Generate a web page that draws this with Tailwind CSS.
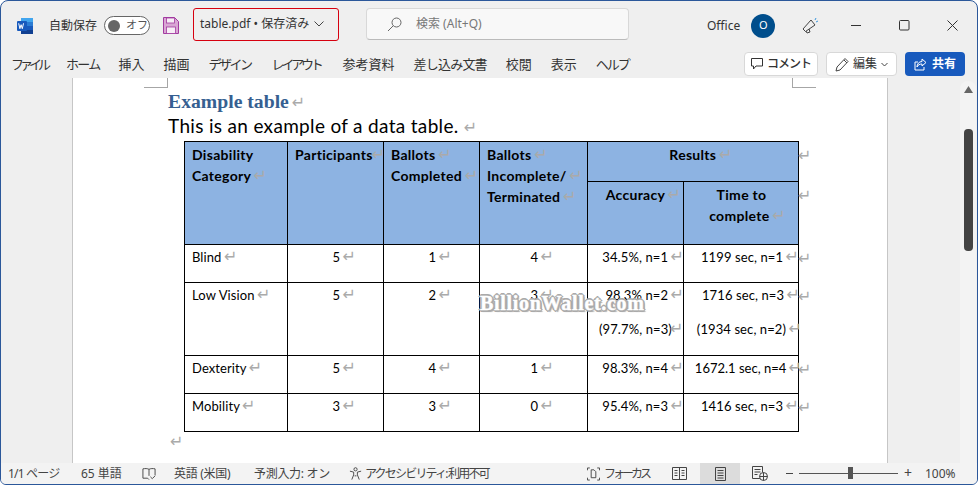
<!DOCTYPE html>
<html lang="ja">
<head>
<meta charset="UTF-8">
<title>table.pdf - Word</title>
<script src="https://cdn.jsdelivr.net/npm/@tailwindcss/browser@4"></script>
</head>
<body class="bg-white">
<div class="w-[978px] h-[485px] overflow-hidden flex flex-col bg-[#efefef] border border-[#2b579a] rounded-t-lg rounded-b-md font-['Noto_Sans','Noto_Sans_CJK_JP',sans-serif] text-[#333] relative">

  <!-- Title bar -->
  <div class="h-[49px] shrink-0 flex items-center text-[12px]">
    <svg class="ml-[15px] w-[18px] h-[18px]" viewBox="0 0 18 18">
      <rect x="5" y="1" width="12" height="4" fill="#41a5ee"/><rect x="5" y="5" width="12" height="4" fill="#2b7cd3"/><rect x="5" y="9" width="12" height="4" fill="#185abd"/><rect x="5" y="13" width="12" height="4" fill="#103f91"/>
      <rect x="1" y="4" width="10" height="10" rx="1" fill="#185abd"/>
      <path d="M2.700 6.300l1.200 5.400 1.200-4 1.200 4 1.200-5.400" fill="none" stroke="#fff" stroke-width="1"/>
    </svg>
    <span class="ml-[15px] w-[56px] whitespace-nowrap">自動保存</span>
    <div class="w-[46px] h-[19px] ml-[-1px] rounded-full border border-[#666] bg-white flex items-center pl-[3px]">
      <span class="w-[12px] h-[12px] rounded-full bg-[#666]"></span>
      <span class="ml-[6px] text-[11px] text-[#555] whitespace-nowrap">オフ</span>
    </div>
    <svg class="ml-[13px] w-[16px] h-[17px]" viewBox="0 0 16 17">
      <path d="M.5.5h11l4 4v12H.5z" fill="#d9a6d4" stroke="#a23aa0"/>
      <rect x="3.500" y="1" width="8" height="5" fill="#f7edf6" stroke="#a23aa0" stroke-width=".8"/>
      <rect x="3.500" y="10" width="9" height="6.500" fill="#f7edf6" stroke="#a23aa0" stroke-width=".8"/>
    </svg>
    <div class="ml-[14px] w-[146px] h-[33px] mb-[3px] border border-[#d6000f] rounded-[3px] flex items-center pl-[6px] whitespace-nowrap">
      table.pdf • 保存済み
      <svg class="ml-[5px] w-[10px] h-[6px]" viewBox="0 0 10 6"><path d="M.5.5L5 5 9.500.5" fill="none" stroke="#444"/></svg>
    </div>
    <div class="ml-[27px] w-[263px] h-[32px] mb-[3px] bg-[#f8f8f8] border border-[#d8d8d8] border-b-[#bbb] rounded-[4px] flex items-center pl-[20px] text-[#777] whitespace-nowrap">
      <svg class="w-[15px] h-[15px]" viewBox="0 0 15 15"><circle cx="9.500" cy="5.500" r="4.500" fill="none" stroke="#666"/><path d="M6.300 8.700L1 14" stroke="#666"/></svg>
      <span class="ml-[14px]">検索 (Alt+Q)</span>
    </div>
    <span class="ml-[78px] text-[#333]">Office</span>
    <span class="ml-[11px] w-[24px] h-[24px] rounded-full bg-[#004e8c] text-white text-[11px] flex items-center justify-center">O</span>
    <svg class="ml-[26px] w-[19px] h-[19px]" viewBox="0 0 19 19">
      <path d="M2 13l8-9 4 5-9.500 6.500zM5 15l1 2 3-1-1-3" fill="none" stroke="#444"/>
      <path d="M15 2l-1 2M17 5l-2 1" stroke="#3a96dd"/>
    </svg>
    <svg class="ml-[31px] w-[11px] h-[11px]" viewBox="0 0 11 11"><path d="M0 5.500h10" stroke="#333"/></svg>
    <svg class="ml-[37px] w-[11px] h-[11px]" viewBox="0 0 11 11"><rect x=".5" y=".5" width="9.500" height="9.500" rx="1" fill="none" stroke="#333"/></svg>
    <svg class="ml-[37px] w-[11px] h-[11px]" viewBox="0 0 11 11"><path d="M.5.500l10 10M10.500.500l-10 10" stroke="#333"/></svg>
  </div>

  <!-- Menu bar -->
  <div class="h-[28px] shrink-0 flex items-center text-[13px] text-[#333] pl-[10px] relative">
    <div class="flex gap-[19px] whitespace-nowrap mt-[2px]">
      <span class="tracking-[-4px]">ファイル</span><span class="tracking-[-1.7px]">ホーム</span><span>挿入</span><span>描画</span><span class="tracking-[-2.5px]">デザイン</span><span class="ml-[2px] tracking-[-3.2px]">レイアウト</span><span class="ml-[3px]">参考資料</span><span class="tracking-[-.8px]">差し込み文書</span><span>校閲</span><span>表示</span><span class="tracking-[-2px]">ヘルプ</span>
    </div>
    <div class="ml-auto mr-[12px] flex gap-[8px] text-[12px] font-medium">
      <div class="w-[74px] h-[24px] bg-white border border-[#d8d8d8] rounded-[4px] flex items-center justify-center gap-[3px] tracking-[-1px]">
        <svg class="w-[13px] h-[12px]" viewBox="0 0 13 12"><path d="M.5.500h11v7.500H5L2.500 11V8H.5z" fill="none" stroke="#333"/></svg>
        コメント
      </div>
      <div class="w-[71px] h-[24px] bg-white border border-[#d8d8d8] rounded-[4px] flex items-center justify-center gap-[3px] font-normal">
        <svg class="w-[15px] h-[15px]" viewBox="0 0 15 15"><path d="M1 14l1-4 8-8.500 3 3L5 13zM9 3l3 3" fill="none" stroke="#444"/></svg>
        編集
        <svg class="w-[7px] h-[5px] ml-[1px]" viewBox="0 0 7 5"><path d="M.5 1l3 3 3-3" fill="none" stroke="#444"/></svg>
      </div>
      <div class="w-[60px] h-[24px] bg-[#185abd] text-white rounded-[4px] flex items-center justify-center gap-[5px] font-bold">
        <svg class="w-[13px] h-[13px]" viewBox="0 0 13 13"><path d="M8 1l4 3.500L8 8V6C5.500 6 4 7 3 9c0-3 2-5.500 5-5.500zM10 9v3H1V4h3" fill="none" stroke="#fff"/></svg>
        共有
      </div>
    </div>
  </div>

  <!-- Document area -->
  <div class="flex-1 min-h-0 flex relative">
    <div class="w-[71px] shrink-0"></div>
    <div class="w-[816px] shrink-0 bg-white border-x border-[#c6c6c6] pl-[95px] relative">
      <!-- crop marks -->
      <div class="absolute left-[71px] top-0 w-[24px] h-[10px] border-r border-b border-[#a6a6a6]"></div>
      <div class="absolute left-[719px] top-0 w-[24px] h-[10px] border-l border-b border-[#a6a6a6]"></div>

      <div class="font-['Liberation_Serif','DejaVu_Sans',serif] font-bold text-[19.700px] leading-[24px] text-[#365f91] pt-[11px] h-[34px] whitespace-nowrap">Example table <span class="text-[#aaa] font-normal text-[16px] leading-[0] ml-[-2px]">↵</span></div>
      <div class="font-['Lato','DejaVu_Sans',sans-serif] text-[19px] leading-[24px] text-black mt-[2px] h-[27px] whitespace-nowrap tracking-[.32px]">This is an example of a data table. <span class="text-[#aaa] text-[16px] leading-[0]">↵</span></div>

      <table class="ml-[16px] table-fixed w-[614px] border-collapse font-['Lato','DejaVu_Sans',sans-serif] text-[13px] text-black leading-[21px] tracking-[.1px]">
        <colgroup><col class="w-[103px]"><col class="w-[96px]"><col class="w-[96px]"><col class="w-[108px]"><col class="w-[96px]"><col class="w-[115px]"></colgroup>
        <thead class="bg-[#8db3e2] text-[14px] tracking-[.3px]">
          <tr class="h-[40px]">
            <th rowspan="2" class="border border-black align-top text-left font-bold px-[7px] pt-[2px]">Disability Category <span class="text-[#aaa] font-normal text-[16px] leading-[0] ml-[-1px] mr-[-2px]">↵</span></th>
            <th rowspan="2" class="border border-black align-top text-left font-bold pl-[7px] pt-[2px] whitespace-nowrap">Participants<span class="relative z-10 text-[#aaa] font-normal text-[16px] leading-[0] ml-[-1px] mr-[-4px]">↵</span></th>
            <th rowspan="2" class="border border-black align-top text-left font-bold pl-[7px] pt-[2px] whitespace-nowrap">Ballots <span class="text-[#aaa] font-normal text-[16px] leading-[0] ml-[-1px] mr-[-2px]">↵</span><br>Completed <span class="text-[#aaa] font-normal text-[16px] leading-[0] ml-[-1px] mr-[-2px]">↵</span></th>
            <th rowspan="2" class="border border-black align-top text-left font-bold pl-[7px] pt-[2px] whitespace-nowrap">Ballots <span class="text-[#aaa] font-normal text-[16px] leading-[0] ml-[-1px] mr-[-2px]">↵</span><br>Incomplete/ <span class="text-[#aaa] font-normal text-[16px] leading-[0] ml-[-1px] mr-[-2px]">↵</span><br>Terminated <span class="text-[#aaa] font-normal text-[16px] leading-[0] ml-[-1px] mr-[-2px]">↵</span></th>
            <th colspan="2" class="border border-black align-top text-center font-bold pt-[2px] pl-[14px] relative">Results <span class="text-[#aaa] font-normal text-[16px] leading-[0] ml-[-1px] mr-[-2px]">↵</span><span class="absolute left-[100%] top-[2px] text-[#aaa] font-normal text-[16px]">↵</span></th>
          </tr>
          <tr class="h-[63px]">
            <th class="border border-black align-top text-center font-bold pt-[2px] pl-[14px] whitespace-nowrap">Accuracy <span class="text-[#aaa] font-normal text-[16px] leading-[0] ml-[-1px] mr-[-2px]">↵</span></th>
            <th class="border border-black align-top text-center font-bold pt-[2px] pl-[5px] pr-[4px] relative">Time to<br><span class="pl-[10px]">complete</span> <span class="text-[#aaa] font-normal text-[16px] leading-[0] ml-[-1px] mr-[-2px]">↵</span><span class="absolute left-[100%] top-[2px] text-[#aaa] font-normal text-[16px]">↵</span></th>
          </tr>
        </thead>
        <tbody>
          <tr class="h-[38px]">
            <td class="border border-black align-top px-[7px] pt-[2px]">Blind <span class="text-[#aaa] text-[16px] leading-[0] ml-[-1px] mr-[-2px]">↵</span></td>
            <td class="border border-black align-top text-right pr-[29px] pt-[2px]">5 <span class="text-[#aaa] text-[16px] leading-[0] ml-[-1px] mr-[-2px]">↵</span></td>
            <td class="border border-black align-top text-right pr-[29px] pt-[2px]">1 <span class="text-[#aaa] text-[16px] leading-[0] ml-[-1px] mr-[-2px]">↵</span></td>
            <td class="border border-black align-top text-right pr-[35px] pt-[2px]">4 <span class="text-[#aaa] text-[16px] leading-[0] ml-[-1px] mr-[-2px]">↵</span></td>
            <td class="border border-black align-top text-right pr-[1px] pt-[2px] whitespace-nowrap">34.5%, n=1 <span class="text-[#aaa] text-[16px] leading-[0] ml-[-1px] mr-[-2px]">↵</span></td>
            <td class="border border-black align-top text-right pr-[1px] pt-[2px] whitespace-nowrap relative">1199 sec, n=1 <span class="text-[#aaa] text-[16px] leading-[0] ml-[-1px] mr-[-2px]">↵</span><span class="absolute left-[100%] top-[2px] text-[#aaa] text-[16px]">↵</span></td>
          </tr>
          <tr class="h-[73px]">
            <td class="border border-black align-top px-[7px] pt-[2px] whitespace-nowrap">Low Vision <span class="text-[#aaa] text-[16px] leading-[0] ml-[-1px] mr-[-2px]">↵</span></td>
            <td class="border border-black align-top text-right pr-[29px] pt-[2px]">5 <span class="text-[#aaa] text-[16px] leading-[0] ml-[-1px] mr-[-2px]">↵</span></td>
            <td class="border border-black align-top text-right pr-[29px] pt-[2px]">2 <span class="text-[#aaa] text-[16px] leading-[0] ml-[-1px] mr-[-2px]">↵</span></td>
            <td class="border border-black align-top text-right pr-[35px] pt-[2px]">3 <span class="text-[#aaa] text-[16px] leading-[0] ml-[-1px] mr-[-2px]">↵</span></td>
            <td class="border border-black align-top pt-[2px] whitespace-nowrap"><div class="h-[34px] text-right pr-[1px]">98.3% n=2 <span class="text-[#aaa] text-[16px] leading-[0] ml-[-1px] mr-[-2px]">↵</span></div><div class="pl-[11px]">(97.7%, n=3)<span class="relative z-10 text-[#aaa] text-[16px] leading-[0] ml-[-2px] mr-[-4px]">↵</span></div></td>
            <td class="border border-black align-top text-right pt-[2px] whitespace-nowrap relative"><div class="h-[34px]">1716 sec, n=3 <span class="text-[#aaa] text-[16px] leading-[0] ml-[-1px] mr-[-2px]">↵</span></div><div class="mr-[-2px]">(1934 sec, n=2) <span class="text-[#aaa] text-[16px] leading-[0] ml-[-1px] mr-[-2px]">↵</span></div><span class="absolute left-[100%] top-[2px] text-[#aaa] text-[16px]">↵</span></td>
          </tr>
          <tr class="h-[38px]">
            <td class="border border-black align-top px-[7px] pt-[2px]">Dexterity <span class="text-[#aaa] text-[16px] leading-[0] ml-[-1px] mr-[-2px]">↵</span></td>
            <td class="border border-black align-top text-right pr-[29px] pt-[2px]">5 <span class="text-[#aaa] text-[16px] leading-[0] ml-[-1px] mr-[-2px]">↵</span></td>
            <td class="border border-black align-top text-right pr-[29px] pt-[2px]">4 <span class="text-[#aaa] text-[16px] leading-[0] ml-[-1px] mr-[-2px]">↵</span></td>
            <td class="border border-black align-top text-right pr-[35px] pt-[2px]">1 <span class="text-[#aaa] text-[16px] leading-[0] ml-[-1px] mr-[-2px]">↵</span></td>
            <td class="border border-black align-top text-right pr-[1px] pt-[2px] whitespace-nowrap">98.3%, n=4 <span class="text-[#aaa] text-[16px] leading-[0] ml-[-1px] mr-[-2px]">↵</span></td>
            <td class="border border-black align-top text-right pt-[2px] whitespace-nowrap tracking-normal relative"><div class="mr-[-2px]">1672.1 sec, n=4 <span class="text-[#aaa] text-[16px] leading-[0] ml-[-1px] mr-[-2px]">↵</span></div><span class="absolute left-[100%] top-[2px] text-[#aaa] text-[16px]">↵</span></td>
          </tr>
          <tr class="h-[38px]">
            <td class="border border-black align-top px-[7px] pt-[2px]">Mobility <span class="text-[#aaa] text-[16px] leading-[0] ml-[-1px] mr-[-2px]">↵</span></td>
            <td class="border border-black align-top text-right pr-[29px] pt-[2px]">3 <span class="text-[#aaa] text-[16px] leading-[0] ml-[-1px] mr-[-2px]">↵</span></td>
            <td class="border border-black align-top text-right pr-[29px] pt-[2px]">3 <span class="text-[#aaa] text-[16px] leading-[0] ml-[-1px] mr-[-2px]">↵</span></td>
            <td class="border border-black align-top text-right pr-[35px] pt-[2px]">0 <span class="text-[#aaa] text-[16px] leading-[0] ml-[-1px] mr-[-2px]">↵</span></td>
            <td class="border border-black align-top text-right pr-[1px] pt-[2px] whitespace-nowrap">95.4%, n=3 <span class="text-[#aaa] text-[16px] leading-[0] ml-[-1px] mr-[-2px]">↵</span></td>
            <td class="border border-black align-top text-right pr-[1px] pt-[2px] whitespace-nowrap relative">1416 sec, n=3 <span class="text-[#aaa] text-[16px] leading-[0] ml-[-1px] mr-[-2px]">↵</span><span class="absolute left-[100%] top-[2px] text-[#aaa] text-[16px]">↵</span></td>
          </tr>
        </tbody>
      </table>
      <div class="font-['DejaVu_Sans',sans-serif] text-[#aaa] text-[16px] leading-[18px] mt-[1px] ml-[2px]">↵</div>

      <!-- watermark -->
      <div class="absolute left-[407px] top-[213px] font-['Liberation_Serif',serif] font-bold text-[20px] leading-[24px] tracking-[.7px] text-white whitespace-nowrap [-webkit-text-stroke:0.4px_white] [text-shadow:1px_1px_0_#aaa,-1px_-1px_0_#aaa,1px_-1px_0_#aaa,-1px_1px_0_#aaa,2px_0_0_#aaa,-2px_0_0_#aaa,0_2px_0_#aaa,0_-2px_0_#aaa,2px_2px_1px_#aaa]">BillionWallet.com</div>
    </div>

    <!-- scrollbar -->
    <div class="ml-auto mr-[1px] mt-[3px] w-[16px] h-full bg-[#f3f3f3] rounded-t-lg flex flex-col items-center">
      <svg class="mt-[5px] w-[9px] h-[7px]" viewBox="0 0 9 7"><path d="M4.500 0L9 7H0z" fill="#666"/></svg>
      <div class="mt-[36px] w-[9px] h-[122px] bg-[#444] rounded-[4px]"></div>
    </div>
  </div>

  <!-- Status bar -->
  <div class="h-[21px] shrink-0 bg-[#f3f3f3] flex items-center text-[12px] text-[#444] whitespace-nowrap relative z-10 [&>*]:shrink-0">
    <span class="ml-[7px] w-[53px] tracking-[-.8px]">1/1 ページ</span>
    <span class="ml-[20px] w-[41px]">65 単語</span>
    <svg class="ml-[20px] w-[14px] h-[14px]" viewBox="0 0 15 14"><path d="M7.500 2C6 1 3 1 1 1.500v10h5l1.500 1.500M7.500 2C9 1 12 1 14 1.500v7M7.500 2v7M9 10l2 2 3-3" fill="none" stroke="#444"/></svg>
    <span class="ml-[18px] w-[62px] tracking-[-.3px]">英語 (米国)</span>
    <span class="ml-[18px] w-[75px] tracking-[-.3px]">予測入力: オン</span>
    <svg class="ml-[20px] w-[14px] h-[15px]" viewBox="0 0 15 15"><circle cx="7" cy="3" r="1.700" fill="none" stroke="#444"/><path d="M1 5l4 1v3l-2 5M13 5L9 6v3l2 5M6 10h2" fill="none" stroke="#444"/></svg>
    <span class="ml-[2px] w-[125px] tracking-[-1.800px]">アクセシビリティ: 利用不可</span>

    <svg class="ml-[97px] w-[13px] h-[14px]" viewBox="0 0 14 14"><path d="M.5 3V.5H3M11 .5h2.500V3M.5 11v2.500H3M11 13.500h2.500V11M4.500 11V2.500h3l2 2V11z" fill="none" stroke="#444"/></svg>
    <span class="ml-[4px] w-[44px] tracking-[-3px]">フォーカス</span>
    <svg class="ml-[24px] w-[15px] h-[13px]" viewBox="0 0 15 13"><path d="M.5.500h14v12H.500zM7.500.5v12M2.500 3.500h3M2.500 6h3M2.500 8.500h3M9.500 3.500h3M9.500 6h3M9.500 8.500h3" fill="none" stroke="#444"/></svg>
    <div class="ml-[13px] w-[40px] h-full bg-[#dcdcdc] flex items-center justify-center">
      <svg class="w-[11px] h-[14px]" viewBox="0 0 11 14"><path d="M.5.500h10v13H.5zM2.500 3.500h6M2.500 6h6M2.500 8.500h6M2.500 11h6" fill="none" stroke="#444"/></svg>
    </div>
    <svg class="ml-[12px] w-[16px] h-[15px]" viewBox="0 0 16 15"><path d="M9 12.500H.5V.5h10v6M2.500 3.500h6M2.500 6h6M2.500 8.500h3" fill="none" stroke="#444"/><circle cx="11.500" cy="10.500" r="4" fill="#f3f3f3" stroke="#444"/><path d="M7.500 10.500h8M11.500 6.500v8" stroke="#444"/></svg>
    <span class="ml-[18px] w-[7px] h-[1px] bg-[#444]"></span>
    <div class="ml-[6px] w-[99px] h-[1px] bg-[#555] relative">
      <span class="absolute left-[49px] top-[-6px] w-[5px] h-[12px] bg-[#555]"></span>
    </div>
    <span class="ml-[6px] w-[7px] text-[14px] leading-none mb-[2px]">+</span>
    <span class="ml-[14px]">100%</span>
  </div>
</div>
</body>
</html>
